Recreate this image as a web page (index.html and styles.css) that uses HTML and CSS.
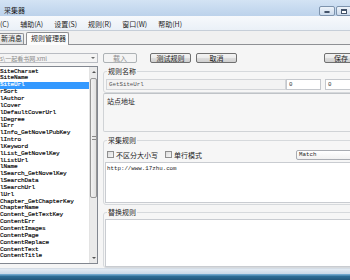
FILE: index.html
```html
<!DOCTYPE html>
<html>
<head>
<meta charset="utf-8">
<link rel="stylesheet" href="styles.css">
</head>
<body>
<div class="win">
  <div class="titlebar">
    <span class="title">采集器</span>
    <div class="wbtns">
      <span class="wb"><span class="g-min"></span></span>
      <span class="wb"><span class="g-max"></span></span>
    </div>
  </div>
  <div class="menubar">
    <span class="mi first">(C)</span>
    <span class="mi">辅助(A)</span>
    <span class="mi">设置(S)</span>
    <span class="mi">规则(R)</span>
    <span class="mi">窗口(W)</span>
    <span class="mi">帮助(H)</span>
  </div>
  <div class="tabs">
    <span class="tab first">新消息</span>
    <span class="tab active">规则管理器</span>
  </div>
  <div class="client">
    <div class="toolbar">
      <div class="combo"><span class="ctext">s\一起看书网.xml</span><span class="carrow"></span></div>
      <button class="btn disabled b-load">载入</button>
      <button class="btn b-test">测试规则</button>
      <button class="btn b-cancel">取消</button>
      <button class="btn b-save">保存</button>
    </div>
    <div class="body">
      <div class="list">
        <ul class="items">
          <li>SiteCharset</li>
          <li>SiteName</li>
          <li class="sel">SiteUrl</li>
          <li>rSort</li>
          <li>lAuthor</li>
          <li>lCover</li>
          <li>lDefaultCoverUrl</li>
          <li>lDegree</li>
          <li>lErr</li>
          <li>lInfo_GetNovelPubKey</li>
          <li>lIntro</li>
          <li>lKeyword</li>
          <li>lList_GetNovelKey</li>
          <li>lListUrl</li>
          <li>lName</li>
          <li>lSearch_GetNovelKey</li>
          <li>lSearchData</li>
          <li>lSearchUrl</li>
          <li>lUrl</li>
          <li>Chapter_GetChapterKey</li>
          <li>ChapterName</li>
          <li>Content_GetTextKey</li>
          <li>ContentErr</li>
          <li>ContentImages</li>
          <li>ContentPage</li>
          <li>ContentReplace</li>
          <li>ContentText</li>
          <li>ContentTitle</li>
        </ul>
        <div class="vscroll">
          <span class="sarrow up"></span>
          <span class="thumb"><span class="grip"></span></span>
          <span class="strack"></span>
          <span class="sarrow down"></span>
        </div>
      </div>
      <div class="right">
        <fieldset class="grp g1">
          <legend>规则名称</legend>
          <div class="frow">
            <span class="field name">GetSiteUrl</span>
            <span class="field num n1">0</span>
            <span class="field num n2">0</span>
          </div>
        </fieldset>
        <div class="panel g2"><span class="plabel">站点地址</span></div>
        <fieldset class="grp g3">
          <legend>采集规则</legend>
          <div class="crow">
            <span class="chk"></span><span class="clabel">不区分大小写</span>
            <span class="chk c2"></span><span class="clabel">单行模式</span>
            <span class="select">Match</span>
          </div>
          <div class="area a1">http://www.17zhu.com</div>
        </fieldset>
        <fieldset class="grp g4">
          <legend>替换规则</legend>
          <div class="area a2"></div>
        </fieldset>
      </div>
    </div>
  </div>
  <div class="frame-bottom"></div>
  <div class="taskbar"></div>
</div>
</body>
</html>
```
FILE: styles.css
```css
* { box-sizing: border-box; margin: 0; padding: 0; }
html, body { width: 350px; height: 280px; overflow: hidden; }
body {
  font-family: "Noto Sans CJK SC", "Liberation Sans", sans-serif;
  font-size: 7px;
  color: #1e1e1e;
  background: #f0f0f0;
}
.win { display: flex; flex-direction: column; height: 280px; }

.titlebar {
  height: 16px; flex: none; display: flex; align-items: flex-start;
  background: linear-gradient(#d3e3f4, #bcd2eb);
}
.title { margin-left: 4px; line-height: 8px; margin-top: 6px; color: #1a1a1a; }
.wbtns { margin-left: auto; display: flex; gap: 1px; margin-top: 6px; margin-right: -2px; }
.wb {
  width: 16px; height: 10px; border: 1px solid #7d93ad; border-radius: 2px;
  background: linear-gradient(#edf3fa, #cbdaec);
  display: flex; align-items: center; justify-content: center;
}
.g-min { width: 6px; height: 2px; background: #fff; border: 1px solid #43536a; border-radius: 1px; margin-top: 2px; }
.g-max { width: 6px; height: 5px; border: 1px solid #43536a; border-top-width: 2px; background: #fff; }

.menubar {
  height: 15px; flex: none; display: flex; align-items: center; gap: 11px;
  background: linear-gradient(#f7f9fc, #eaf0f7);
  border-bottom: 1px solid #c6ced8;
  padding-top: 1px;
}
.mi { white-space: nowrap; }
.mi.first { margin-left: 0; }

.tabs {
  height: 14px; flex: none; display: flex; align-items: flex-end;
  background: #f0f0f0; border-bottom: 1px solid #8e9094;
}
.tab {
  height: 11px; line-height: 9px; padding: 0 3px; white-space: nowrap;
  border: 1px solid #8e9094; border-bottom: none; border-radius: 2px 2px 0 0;
  background: linear-gradient(#f4f4f4, #e0e0e0);
}
.tab.first { border-left: none; border-radius: 0 2px 0 0; padding-left: 1px; width: 24px; }
.tab.active {
  height: 13px; line-height: 11px; background: #fcfcfc; margin-left: 2px; margin-bottom: -1px; width: 43px;
  padding: 0 4px;
}

.client { flex: none; height: 223px; background: #f5f5f5; }
.toolbar { display: flex; align-items: flex-start; padding-top: 8px; height: 18px; }
.combo {
  width: 98px; height: 10px; border: 1px solid #b9bcc2; border-left: none; background: #f4f4f4; color: #8a8a8a;
  display: flex; align-items: center; font-size: 6px; white-space: nowrap; overflow: hidden;
}
.ctext { margin-left: 0; }
.carrow {
  margin-left: auto; margin-right: 2px; width: 0; height: 0;
  border-left: 2px solid transparent; border-right: 2px solid transparent; border-top: 2px solid #6d6d6d;
}
.btn {
  height: 10px; border: 1px solid #707070; border-radius: 2px; font: inherit; font-size: 7px; line-height: 8px;
  background: linear-gradient(#f3f3f3 0%, #ebebeb 50%, #dddddd 51%, #cfcfcf 100%);
  color: #1e1e1e; flex: none;
}
.btn.disabled { border-color: #adb2b5; background: #f4f4f4; color: #8d8d8d; }
.b-load { margin-left: 5px; width: 34px; }
.b-test { margin-left: 13px; width: 41px; }
.b-cancel { margin-left: 5px; width: 41px; }
.b-save { margin-left: auto; width: 34px; margin-right: -8px; }

.body { display: flex; gap: 5px; height: 202px; margin-top: 3px; }
.list {
  width: 98px; height: 198px; flex: none; border: 1px solid #828790; border-left: none; background: #fff;
  display: flex;
}
.items {
  list-style: none; flex: 1; overflow: hidden; padding-top: 1.6px;
  font-family: "Liberation Mono", monospace; font-size: 6.1px; line-height: 6.85px; color: #000;
  letter-spacing: -0.15px; -webkit-text-stroke: 0.15px #000;
}
.items li { white-space: nowrap; }
.items li.sel { background: #3399ff; color: #fff; -webkit-text-stroke: 0.15px #fff; }
.vscroll {
  width: 8px; flex: none; display: flex; flex-direction: column; background: #eaeaea;
  border-left: 1px solid #e3e3e3;
}
.sarrow { height: 10px; flex: none; display: flex; align-items: center; justify-content: center; }
.sarrow.up::before { content: ""; border-left: 2px solid transparent; border-right: 2px solid transparent; border-bottom: 2px solid #555; }
.sarrow.down::before { content: ""; border-left: 2px solid transparent; border-right: 2px solid transparent; border-top: 2px solid #555; }
.thumb {
  height: 120px; flex: none; margin: 1px 0 0; border: 1px solid #979797; border-radius: 2px;
  background: linear-gradient(90deg, #f2f2f2, #e1e1e1);
  display: flex; align-items: center; justify-content: center;
}
.grip { width: 4px; height: 4px; border-top: 1px solid #888; border-bottom: 1px solid #888; }
.strack { flex: 1; }

.right { width: 260px; flex: none; display: flex; flex-direction: column; }
.grp {
  border: 1px solid #d6d9dc; border-radius: 3px; padding: 0 1px; background: #f6f6f6;
  min-width: 0;
}
.grp legend { margin-left: 2px; padding: 0 1px; line-height: 10px; font-size: 7px; color: #222; }
.g1 { height: 27px; }
.frow { display: flex; margin-top: 3px; }
.field {
  height: 11px; border: 1px solid #c5c8cd; background: #fff; font-family: "Liberation Mono", monospace;
  font-size: 5.8px; line-height: 9px; padding-left: 2px; color: #333;
}
.field.name { width: 180px; margin-left: 1px; background: #f3f3f3; border-color: #d3d5d8; color: #555; }
.field.n1 { width: 35px; margin-left: 0; }
.field.n2 { width: 34px; margin-left: 4px; }

.panel.g2 {
  height: 39px; border: 1px solid #d0d3d6; border-top-color: #bfc3c7; border-radius: 2px; background: #f6f6f6;
  padding: 2px 3px;
}
.plabel { line-height: 9px; }

.g3 { height: 70px; margin-top: 3px; }
.crow { display: flex; align-items: center; height: 9px; margin-top: 5px; }
.chk {
  width: 7px; height: 7px; border: 1px solid #8f8f8f; flex: none; margin-left: 2px;
  background: linear-gradient(135deg, #dcdcdc, #f7f7f7);
}
.chk.c2 { margin-left: 7px; }
.clabel { margin-left: 2px; white-space: nowrap; color: #222; }
.select {
  margin-left: 94px; width: 60px; height: 10px; border: 1px solid #a9acb2; border-radius: 2px;
  background: linear-gradient(#fff, #f1f1f1); font-family: "Liberation Mono", monospace; font-size: 5.8px;
  line-height: 8px; padding-left: 2px; color: #222;
}
.area {
  background: #fff; border: 1px solid #c9ccd1; margin-top: 3px;
  font-family: "Liberation Mono", monospace; font-size: 5.8px; line-height: 7px; padding: 2px 1px; color: #222;
}
.a1 { height: 41px; }
.g4 { height: 61px; margin-top: 2px; }
.a2 { height: 48px; margin-top: 2px; }

.frame-bottom { height: 6px; flex: none; background: linear-gradient(#e3ebf3, #c9d8e7); border-top: 1px solid #d5dde6; }
.taskbar { height: 6px; flex: none; background: linear-gradient(#6fa6cc 0, #6fa6cc 1px, #2e6f98 2px, #22577c); }
```
